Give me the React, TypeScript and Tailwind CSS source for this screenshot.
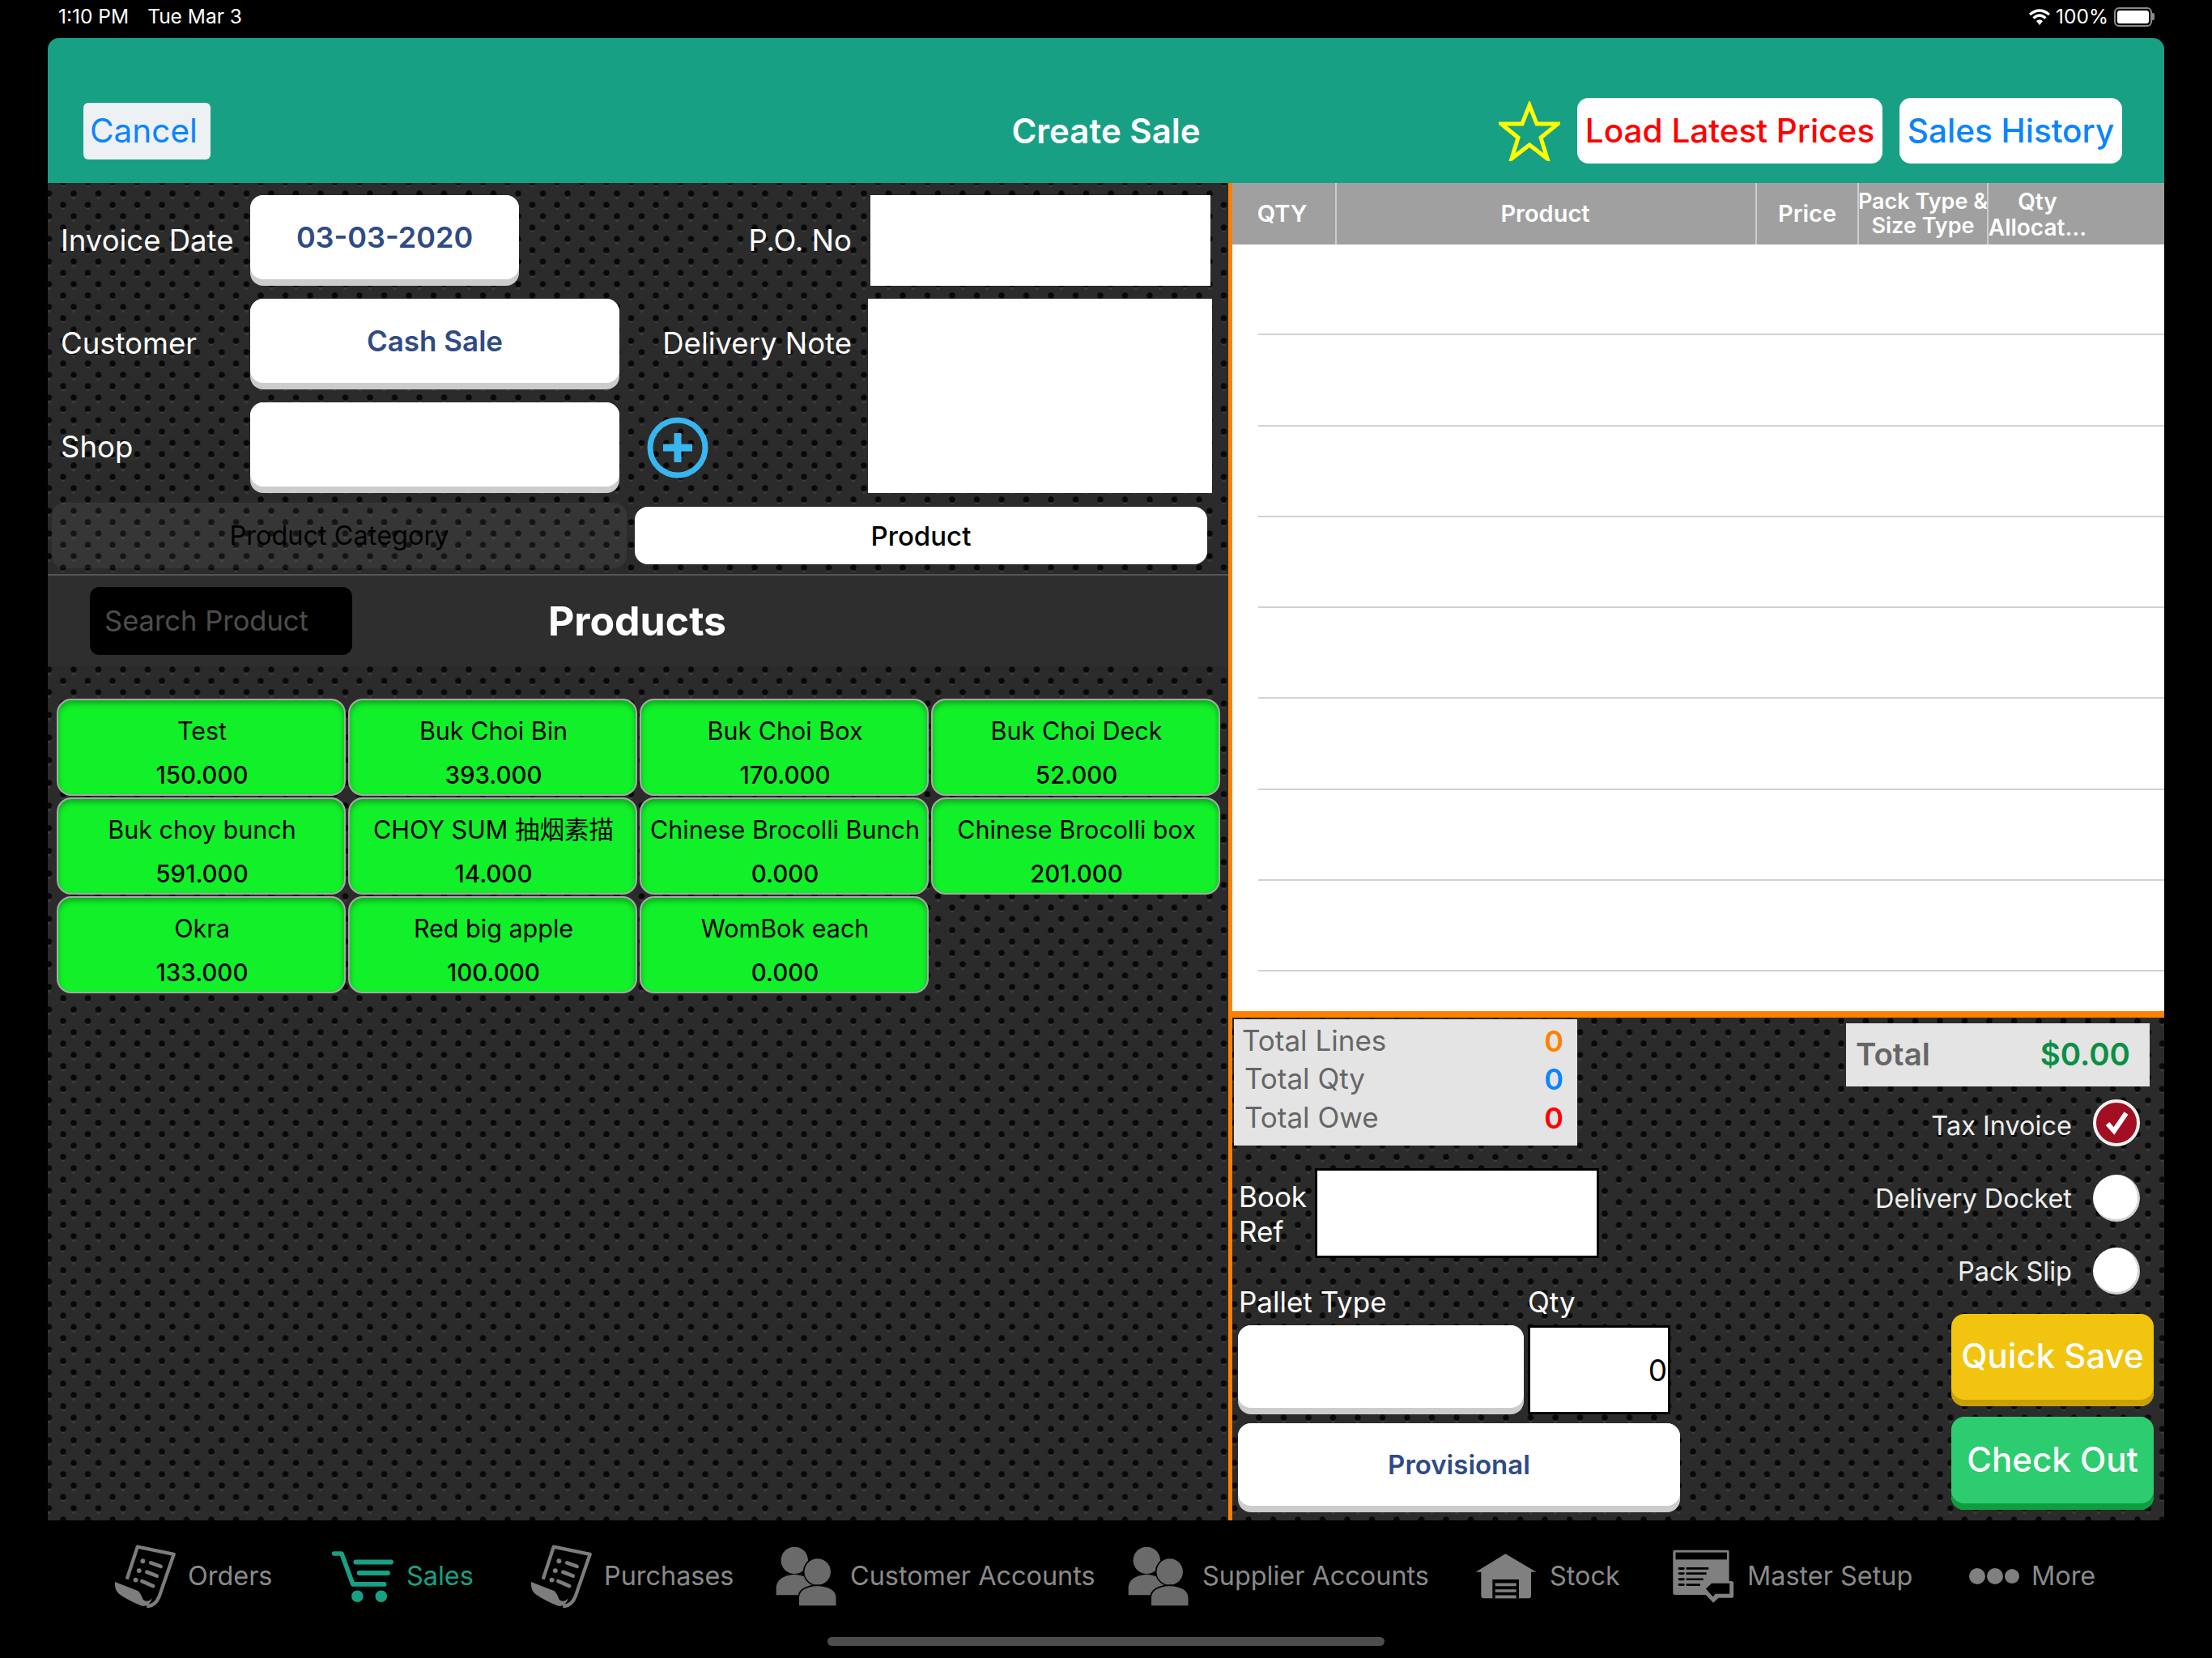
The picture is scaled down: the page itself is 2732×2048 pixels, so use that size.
import React from "react";

const products = [
  { name: "Test", qty: "150.000" },
  { name: "Buk Choi Bin", qty: "393.000" },
  { name: "Buk Choi Box", qty: "170.000" },
  { name: "Buk Choi Deck", qty: "52.000" },
  { name: "Buk choy bunch", qty: "591.000" },
  { name: "CHOY SUM 抽烟素描", qty: "14.000" },
  { name: "Chinese Brocolli Bunch", qty: "0.000" },
  { name: "Chinese Brocolli box", qty: "201.000" },
  { name: "Okra", qty: "133.000" },
  { name: "Red big apple", qty: "100.000" },
  { name: "WomBok each", qty: "0.000" },
];

const OrdersIcon = () => (
  <svg viewBox="25 30 236 238" className="w-[78px] h-[78px]">
    <path d="M75 160 L115 38 L252 66 L197 225 Q182 262 150 262" fill="none" stroke="#7d7d7d" strokeWidth="13" strokeLinejoin="round" />
    <path d="M30 170 L118 205 Q130 218 135 235 Q150 252 170 232 Q158 268 130 260 Q80 240 45 215 Q28 200 30 170Z" fill="#7d7d7d" />
    <circle cx="135" cy="92" r="9" fill="#7d7d7d" />
    <circle cx="121" cy="128" r="9" fill="#7d7d7d" />
    <circle cx="108" cy="163" r="9" fill="#7d7d7d" />
    <path d="M165 98 L203 112 M150 133 L188 148 M132 168 L174 186" stroke="#7d7d7d" strokeWidth="14" strokeLinecap="round" />
  </svg>
);

const CartIcon = () => (
  <svg viewBox="25 45 236 200" className="w-[78px] h-[66px]">
    <path d="M36 60 H64 L106 175 H224" fill="none" stroke="#18a085" strokeWidth="17" strokeLinecap="round" strokeLinejoin="round" />
    <path d="M117 92 H249 M130 133 H237" stroke="#18a085" strokeWidth="18" strokeLinecap="round" />
    <circle cx="123" cy="220" r="22" fill="#18a085" />
    <circle cx="212" cy="220" r="22" fill="#18a085" />
  </svg>
);

const PeopleIcon = () => (
  <svg viewBox="22 34 232 226" className="w-[76px] h-[74px]">
    <circle cx="93" cy="87" r="51" fill="#6a6a6a" />
    <path d="M24 218 V190 Q26 146 93 140 Q160 146 162 190 V218Z" fill="#6a6a6a" />
    <circle cx="180" cy="130" r="52" fill="#6a6a6a" stroke="#000" strokeWidth="5" />
    <path d="M108 260 V226 Q110 186 180 181 Q250 186 252 226 V260Z" fill="#6a6a6a" stroke="#000" strokeWidth="5" />
  </svg>
);

const StockIcon = () => (
  <svg viewBox="36 62 228 168" className="w-[76px] h-[56px]">
    <path d="M148 63 L262 130 H243 V218 Q243 228 233 228 H68 Q58 228 58 218 V130 H38Z" fill="#808080" />
    <rect x="100" y="158" width="98" height="70" fill="#000" />
    <path d="M110 177 H188 M110 200 H188 M110 222 H188" stroke="#808080" strokeWidth="11" />
  </svg>
);

const MasterIcon = () => (
  <svg viewBox="762 44 238 206" className="w-[78px] h-[67px]">
    <rect x="765" y="46" width="213" height="170" rx="7" fill="#808080" />
    <rect x="775" y="55" width="195" height="27" fill="#000" />
    <path d="M815 116 H900 M815 135 H892 M815 157 H880 M815 178 H868" stroke="#000" strokeWidth="8" />
    <path d="M789 116 H805 M789 135 H805 M789 157 H805 M789 178 H805" stroke="#000" strokeWidth="9" strokeLinecap="round" />
    <path d="M874 192 L914 154 V164 H988 Q995 164 995 172 V220 Q995 228 987 228 H938 L918 246 L874 200Z" fill="#808080" />
    <path d="M890 193 L912 172 V172 H980 V212 H926 L917 224Z" fill="#000" />
  </svg>
);

const DotsIcon = () => (
  <svg viewBox="0 0 62 20" className="w-[62px] h-[20px]">
    <circle cx="10" cy="10" r="10" fill="#808080" />
    <circle cx="32" cy="10" r="10" fill="#808080" />
    <circle cx="53" cy="10" r="9" fill="#808080" />
  </svg>
);

const navItems = [
  { label: "Orders", icon: <OrdersIcon />, width: "w-[269px]", gap: "gap-[14px]" },
  { label: "Sales", icon: <CartIcon />, width: "w-[245px]", gap: "gap-[15px]", active: true },
  { label: "Purchases", icon: <OrdersIcon />, width: "w-[304px]", gap: "gap-[14px]" },
  { label: "Customer Accounts", icon: <PeopleIcon />, width: "w-[435px]", gap: "gap-[16px]" },
  { label: "Supplier Accounts", icon: <PeopleIcon />, width: "w-[429px]", gap: "gap-[16px]" },
  { label: "Stock", icon: <StockIcon />, width: "w-[243px]", gap: "gap-[16px]" },
  { label: "Master Setup", icon: <MasterIcon />, width: "w-[367px]", gap: "gap-[15px]" },
  { label: "More", icon: <DotsIcon />, width: "w-[200px]", gap: "gap-[15px]" },
];

const Raised = ({ children, className = "" }: { children?: React.ReactNode; className?: string }) => (
  <div className={`bg-[#cccccc] rounded-[16px] pb-[8px] ${className}`}>
    <div className="bg-white rounded-[16px] h-full flex items-center justify-center">{children}</div>
  </div>
);

const Radio = ({ label, checked }: { label: string; checked?: boolean }) => (
  <div className="flex items-center justify-end gap-[26px] h-[58px] pr-[30px]">
    <span className={`text-[32.5px] text-[#eeeeee] ${checked ? "pt-[8px]" : "pt-[2px]"}`}>{label}</span>
    {checked ? (
      <svg viewBox="0 0 58 58" className="w-[58px] h-[58px]">
        <circle cx="29" cy="29" r="27" fill="#a30f22" stroke="#f2f2f2" strokeWidth="4" />
        <path d="M18 30 L26 39 L41 17" fill="none" stroke="#fff" strokeWidth="6" />
      </svg>
    ) : (
      <div className="w-[58px] h-[58px] rounded-full bg-white border-b-[3px] border-r-[3px] border-[#d4d4d4]" />
    )}
  </div>
);

const TotalRow = ({ label, value, color, className = "" }: { label: string; value: string; color: string; className?: string }) => (
  <div className={`flex justify-between items-center h-[47px] pr-[17px] ${className}`}>
    <span className="text-[35px] text-[#666666]">{label}</span>
    <span className={`text-[36px] font-semibold ${color}`}>{value}</span>
  </div>
);

export default function App() {
  return (
    <div className="w-[2732px] h-[2048px] bg-black overflow-hidden font-[Inter,'Noto_Sans_CJK_SC',sans-serif]">
      {/* status bar */}
      <div className="h-[47px] flex items-center justify-between pl-[72px] pr-[71px] pb-[6px] text-white text-[24.5px]">
        <div className="flex gap-[23px]">
          <span>1:10 PM</span>
          <span>Tue Mar 3</span>
        </div>
        <div className="flex items-center gap-[6px]">
          <svg viewBox="0 0 28 20" className="w-[28px] h-[20px]">
            <path d="M2 7 Q14 -3 26 7 M6.5 11.5 Q14 4.5 21.5 11.5" fill="none" stroke="#fff" strokeWidth="3.2" />
            <path d="M10 15 Q14 11.5 18 15 L14 20Z" fill="#fff" />
          </svg>
          <span>100%</span>
          <div className="flex items-center ml-[1px]">
            <div className="w-[47px] h-[24px] rounded-[6px] border-2 border-[#8a8a8a] p-[2px]">
              <div className="bg-white w-full h-full rounded-[3px]" />
            </div>
            <div className="w-[3px] h-[9px] bg-[#8a8a8a] rounded-r-[2px]" />
          </div>
        </div>
      </div>

      {/* main panel */}
      <div className="mx-[59px] h-[1831px] flex flex-col">
        {/* header */}
        <div className="h-[179px] bg-[#18a085] rounded-t-[14px] flex items-center pt-[50px] pl-[44px]">
          <button className="w-[157px] h-[70px] bg-[#eef1f3] rounded-[6px] text-[#0a84ff] text-[40.5px] text-left pl-[8px] pt-[2px]">
            Cancel
          </button>
          <div className="ml-[806px] w-[600px] text-center text-white text-[42px] font-semibold">Create Sale</div>
          <svg viewBox="0 0 76 74" className="ml-[185px] w-[76px] h-[74px] shrink-0">
            <path d="M38 5 L47 28 H73 L52 45 L60 71 L38 54 L16 71 L24 45 L3 28 H29Z" fill="none" stroke="#ffff00" strokeWidth="5" />
          </svg>
          <button className="ml-[21px] w-[377px] h-[81px] bg-white rounded-[14px] text-[#ff0000] text-[40.5px] font-medium pt-[2px]">
            Load Latest Prices
          </button>
          <button className="ml-[21px] w-[275px] h-[81px] bg-white rounded-[14px] text-[#0a84ff] text-[40.5px] font-medium pt-[2px]">
            Sales History
          </button>
        </div>

        {/* body */}
        <div className="h-[1652px] flex bg-[#2b2b2b] bg-[radial-gradient(circle_at_8px_8px,#080808_3px,transparent_4.5px),radial-gradient(circle_at_25.5px_22px,#080808_3px,transparent_4.5px),radial-gradient(circle_at_8px_13px,#3a3a3a_1.5px,transparent_3px),radial-gradient(circle_at_25.5px_27px,#3a3a3a_1.5px,transparent_3px)] bg-[length:30.5px_28px] bg-[position:-6.5px_5px]">
          {/* left side */}
          <div className="w-[1458px] flex flex-col">
            <div className="pt-[15px] grid grid-cols-[250px_456px_287px_426px] grid-rows-[112px_112px_112px] gap-y-[16px] text-white text-[36.5px]">
              <div className="flex items-center pl-[16px]">Invoice Date</div>
              <div>
                <Raised className="w-[332px] h-full">
                  <span className="text-[#2f4b86] text-[36px] font-semibold">03-03-2020</span>
                </Raised>
              </div>
              <div className="flex items-center justify-end">P.O. No</div>
              <div className="pl-[23px]">
                <div className="bg-white w-[420px] h-full" />
              </div>

              <div className="flex items-center pl-[16px] pb-[2px]">Customer</div>
              <Raised>
                <span className="text-[#2f4b86] text-[35px] font-semibold">Cash Sale</span>
              </Raised>
              <div className="flex items-center justify-end pb-[2px]">Delivery Note</div>
              <div className="row-span-2 pl-[20px]">
                <div className="bg-white w-[425px] h-full" />
              </div>

              <div className="flex items-center pl-[16px] pb-[2px]">Shop</div>
              <Raised />
              <div className="flex items-center pl-[34px]">
                <svg viewBox="0 0 76 76" className="w-[76px] h-[76px]">
                  <circle cx="38" cy="38" r="34" fill="none" stroke="#38b6f0" strokeWidth="7" />
                  <path d="M38 20 V56 M20 38 H56" stroke="#38b6f0" strokeWidth="9" />
                </svg>
              </div>
            </div>

            {/* category toggle */}
            <div className="mt-[12px] h-[81px] flex items-center">
              <div className="ml-[5px] w-[710px] h-full bg-white/5 rounded-[16px] flex items-center justify-center text-black text-[32.5px] pt-[2px]">
                Product Category
              </div>
              <div className="ml-[10px] w-[707px] h-[71px] bg-white rounded-[16px] flex items-center justify-center text-black text-[33px] font-medium pt-[2px]">
                Product
              </div>
            </div>

            {/* products bar */}
            <div className="mt-[7px] h-[114px] bg-[#2e2e2e] border-t-2 border-[#555555] flex items-center">
              <div className="ml-[52px] w-[324px] h-[84px] bg-black rounded-[12px] flex items-center pl-[18px] text-[#4d4d4d] text-[34.5px]">
                Search Product
              </div>
              <div className="ml-[122px] w-[460px] text-center text-white text-[50px] font-bold">Products</div>
            </div>

            {/* product tiles */}
            <div className="mt-[40px] pl-[11px] grid grid-cols-[357px_357px_357px_357px] auto-rows-[120px] gap-x-[3px] gap-y-[2px]">
              {products.map((p) => (
                <div
                  key={p.name}
                  className="bg-[#12f02a] border-2 border-[#a8a8a8] rounded-[18px] shadow-[inset_0_4px_6px_rgba(0,0,0,0.3)] flex flex-col items-center pt-[19px] pl-[2px] text-black"
                >
                  <span className="text-[30.5px] leading-[38px] whitespace-nowrap">{p.name}</span>
                  <span className="text-[29.5px] leading-[36px] mt-[17px] font-medium">{p.qty}</span>
                </div>
              ))}
            </div>
          </div>

          {/* right side */}
          <div className="w-[1156px] border-l-[5px] border-[#ff8000] flex flex-col">
            {/* table head */}
            <div className="h-[76px] bg-[#a0a0a0] flex text-white font-semibold text-[29px] text-center">
              <div className="w-[123px] mr-[4px] flex items-center justify-center">QTY</div>
              <div className="w-[2px] bg-[#cccccc]" />
              <div className="w-[515px] mr-[2px] flex items-center justify-center">Product</div>
              <div className="w-[2px] bg-[#cccccc]" />
              <div className="w-[124px] flex items-center justify-center">Price</div>
              <div className="w-[2px] bg-[#cccccc]" />
              <div className="w-[158px] flex items-center justify-center text-[27px] leading-[30px] whitespace-nowrap">
                Pack Type &amp;
                <br />
                Size Type
              </div>
              <div className="w-[2px] bg-[#cccccc]" />
              <div className="w-[121px] flex items-center justify-center text-[28px] leading-[32px] whitespace-nowrap pt-[2px]">
                Qty
                <br />
                Allocat...
              </div>
            </div>

            {/* table rows */}
            <div className="h-[947px] bg-white">
              {[0, 1, 2, 3, 4, 5, 6, 7].map((i) => (
                <div key={i} className="h-[112.3px] ml-[32px] border-b-2 border-[#d2d2d2]" />
              ))}
            </div>

            <div className="h-[8px] bg-[#ff8000]" />

            {/* lower panel */}
            <div className="h-[621px] flex justify-between">
              <div className="w-[553px] pl-[2px]">
                <div className="mt-[2px] w-[424px] h-[156px] bg-[#e4e4e4] pl-[10px] py-[3px]">
                  <TotalRow label="Total Lines" value="0" color="text-[#ff8000]" />
                  <TotalRow label="Total Qty" value="0" color="text-[#0a84ff]" className="pl-[3px]" />
                  <TotalRow label="Total Owe" value="0" color="text-[#ff0000]" className="pl-[3px] pt-[2px]" />
                </div>

                <div className="mt-[28px] flex items-center text-white text-[35px] leading-[43px]">
                  <div className="w-[100px] pl-[6px] pt-[2px]">
                    Book
                    <br />
                    Ref
                  </div>
                  <div className="w-[351px] h-[111px] bg-white border-[3px] border-black" />
                </div>

                <div className="mt-[33px] h-[42px] flex items-center text-white text-[35px] pl-[6px]">
                  <span className="w-[357px]">Pallet Type</span>
                  <span>Qty</span>
                </div>

                <div className="mt-[8px] flex gap-[5px] pl-[5px]">
                  <Raised className="w-[353px] h-[110px]" />
                  <div className="w-[176px] h-[110px] bg-white border-[3px] border-black flex items-center justify-end pr-[1px] pt-[2px] text-black text-[37px]">
                    0
                  </div>
                </div>

                <Raised className="mt-[11px] ml-[5px] w-[546px] h-[110px]">
                  <span className="text-[#2f4b86] text-[33px] font-semibold pt-[2px]">Provisional</span>
                </Raised>
              </div>

              <div className="w-[393px] flex flex-col">
                <div className="mt-[7px] w-[375px] h-[78px] bg-[#e4e4e4] flex items-center justify-between px-[12px] pr-[24px] text-[38.5px] font-semibold">
                  <span className="text-[#666666]">Total</span>
                  <span className="text-[#0a8f45]">$0.00</span>
                </div>
                <div className="mt-[16px] flex flex-col">
                  <Radio label="Tax Invoice" checked />
                  <div className="h-[35px]" />
                  <Radio label="Delivery Docket" />
                  <div className="h-[32px]" />
                  <Radio label="Pack Slip" />
                </div>
                <button className="mt-[24px] ml-[130px] w-[250px] h-[114px] bg-[#f1c40f] rounded-[16px] shadow-[inset_0_-8px_0_#c99f08] text-white text-[42px] font-medium pb-[12px]">
                  Quick Save
                </button>
                <button className="mt-[13px] ml-[130px] w-[250px] h-[115px] bg-[#2ecc71] rounded-[16px] shadow-[inset_0_-8px_0_#0f9d3f] text-white text-[42px] font-medium pb-[10px]">
                  Check Out
                </button>
              </div>
            </div>
          </div>
        </div>
      </div>

      {/* tab bar */}
      <div className="h-[170px] flex flex-col">
        <div className="h-[144px] pl-[140px] flex items-center pb-[6px]">
          {navItems.map((item) => (
            <div key={item.label} className={`${item.width} ${item.gap} flex items-center shrink-0`}>
              {item.icon}
              <span className={`text-[32.4px] whitespace-nowrap ${item.active ? "text-[#18a085]" : "text-[#8a8a8a]"}`}>
                {item.label}
              </span>
            </div>
          ))}
        </div>
        <div className="w-[688px] h-[11px] mx-auto bg-[#4d4d4d] rounded-full" />
      </div>
    </div>
  );
}
